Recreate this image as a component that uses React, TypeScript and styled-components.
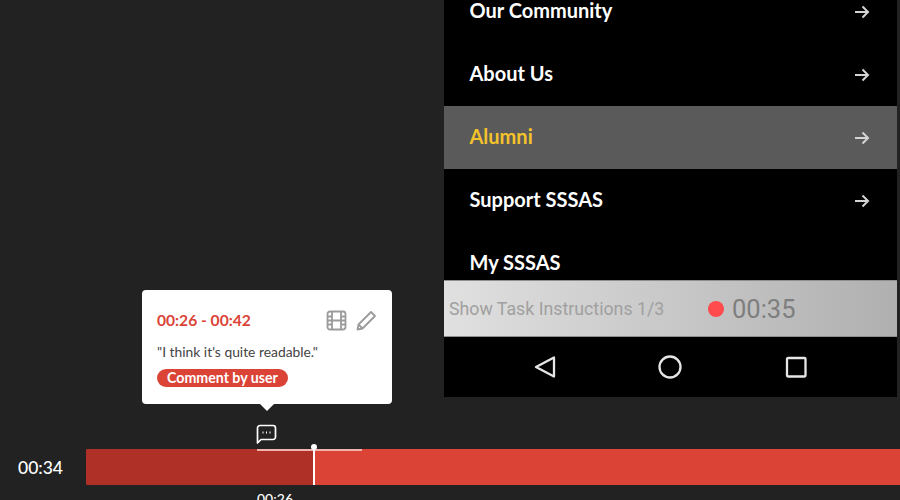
import React from 'react';
import styled, { createGlobalStyle } from 'styled-components';

const GlobalStyle = createGlobalStyle`
  html, body {
    margin: 0;
    padding: 0;
    background: #222222;
  }
`;

const Page = styled.div`
  position: relative;
  width: 900px;
  height: 500px;
  overflow: hidden;
  background: #222222;
  font-family: 'Lato', sans-serif;
`;

const Stage = styled.div`
  display: flex;
  justify-content: flex-end;
  height: 397px;
  padding-right: 3px;
`;

const Phone = styled.div`
  display: flex;
  flex-direction: column;
  width: 453px;
  height: 397px;
  background: #000;
  overflow: hidden;
`;

const Menu = styled.div`
  height: 280px;
  overflow: hidden;
`;

const MenuList = styled.div`
  margin-top: -20px;
`;

const MenuRow = styled.div<{ $active?: boolean }>`
  display: flex;
  align-items: center;
  justify-content: space-between;
  box-sizing: border-box;
  height: 63px;
  padding: 0 27px 4px 25.5px;
  background: ${p => (p.$active ? '#5a5a5a' : 'transparent')};
  color: ${p => (p.$active ? '#f4c22b' : '#fff')};
  font-size: 20px;
  font-weight: 700;
`;

const Arrow = styled.svg`
  width: 16px;
  height: 14px;
  margin-top: 5px;
  color: #d4d4d4;
`;

const TaskBar = styled.div`
  display: flex;
  align-items: center;
  box-sizing: border-box;
  height: 57px;
  padding-left: 5px;
  background: linear-gradient(90deg, #e0e0e0 0%, #b0b0b0 100%);
  border-top: 1px solid #8f8f8f;
  border-bottom: 1px solid #8f8f8f;
  font-family: 'Roboto', sans-serif;
`;

const TaskLabel = styled.span`
  width: 259px;
  color: #a0a0a0;
  font-size: 17.75px;
  white-space: nowrap;
`;

const RecDot = styled.span`
  width: 16px;
  height: 16px;
  border-radius: 50%;
  background: #ff4b4e;
  margin-right: 8px;
`;

const RecTime = styled.span`
  color: #7e7e7e;
  font-size: 25.5px;
`;

const NavBar = styled.div`
  display: flex;
  align-items: center;
  flex: 1;
  padding-left: 89px;
  gap: 101px;
  color: #e6e6e6;
`;

const NavIcon = styled.svg`
  width: 24px;
  height: 24px;
`;

const Timeline = styled.div`
  display: flex;
  align-items: center;
  height: 36px;
  margin-top: 52px;
`;

const CurrentTime = styled.div`
  width: 86px;
  box-sizing: border-box;
  padding-left: 18px;
  color: #fff;
  font-size: 17.5px;
  font-weight: 500;
  font-family: 'Lato', sans-serif;
`;

const Track = styled.div`
  position: relative;
  flex: 1;
  height: 36px;
  background: #db4337;
  border-radius: 2px 0 0 2px;
`;

const Played = styled.div`
  height: 100%;
  background: #ae3026;
  border-radius: 2px 0 0 2px;
`;

const CommentRange = styled.div`
  position: absolute;
  top: 0;
  height: 2px;
  background: #efb4ae;
`;

const Playhead = styled.div`
  position: absolute;
  top: 0;
  bottom: 0;
  width: 2px;
  background: #fff;

  &::before {
    content: '';
    position: absolute;
    top: -5px;
    left: -2px;
    width: 6px;
    height: 6px;
    border-radius: 50%;
    background: #fff;
  }
`;

const CommentMark = styled.svg`
  position: absolute;
  top: -25px;
  width: 21px;
  height: 21px;
  color: #fff;
`;

const MarkTime = styled.div`
  position: absolute;
  top: 41px;
  color: #fff;
  font-size: 14px;
  font-weight: 500;
`;

const Popover = styled.div`
  position: absolute;
  left: 142px;
  top: 290px;
  box-sizing: border-box;
  width: 250px;
  height: 114px;
  padding: 20px 15px 0;
  background: #fff;
  border-radius: 4px;

  &::after {
    content: '';
    position: absolute;
    left: 118px;
    bottom: -7px;
    border-left: 7px solid transparent;
    border-right: 7px solid transparent;
    border-top: 7px solid #fff;
  }
`;

const PopoverHead = styled.div`
  display: flex;
  align-items: center;
  justify-content: space-between;
  height: 20px;
`;

const Range = styled.span`
  color: #db4337;
  font-size: 15.6px;
  font-weight: 700;
`;

const PopoverIcons = styled.div`
  display: flex;
  align-items: center;
  gap: 9px;
  color: #9b9b9b;
`;

const PopoverIcon = styled.svg`
  width: 21px;
  height: 21px;
`;

const Quote = styled.div`
  margin-top: 13px;
  color: #444;
  font-size: 13.85px;
  line-height: 18px;
`;

const Tag = styled.span`
  display: inline-block;
  margin-top: 8px;
  padding: 0 10px;
  height: 18px;
  line-height: 17px;
  border-radius: 9px;
  background: #db4337;
  color: #fff;
  font-size: 14.2px;
  font-weight: 700;
`;

const menuItems = ['Our Community', 'About Us', 'Alumni', 'Support SSSAS', 'My SSSAS'];

const App: React.FC = () => {
  return (
    <Page>
      <GlobalStyle />
      <Stage>
        <Phone>
          <Menu>
            <MenuList>
              {menuItems.map(item => (
                <MenuRow key={item} $active={item === 'Alumni'}>
                  {item}
                  {item !== 'My SSSAS' && (
                    <Arrow viewBox="0 0 16 14" fill="none" stroke="currentColor" strokeWidth="2">
                      <path d="M1 7h13M8.500 1.500 14 7l-5.500 5.500" />
                    </Arrow>
                  )}
                </MenuRow>
              ))}
            </MenuList>
          </Menu>
          <TaskBar>
            <TaskLabel>Show Task Instructions 1/3</TaskLabel>
            <RecDot />
            <RecTime>00:35</RecTime>
          </TaskBar>
          <NavBar>
            <NavIcon viewBox="0 0 24 24" fill="none" stroke="currentColor" strokeWidth="2.300" strokeLinejoin="round">
              <path d="M21 2.500v19L3 12z" />
            </NavIcon>
            <NavIcon viewBox="0 0 24 24" fill="none" stroke="currentColor" strokeWidth="2.300">
              <circle cx="12" cy="12" r="10.500" />
            </NavIcon>
            <NavIcon viewBox="0 0 24 24" fill="none" stroke="currentColor" strokeWidth="2.300" strokeLinejoin="round">
              <rect x="4" y="3" width="18.500" height="18.500" rx="1" />
            </NavIcon>
          </NavBar>
        </Phone>
      </Stage>

      <Timeline>
        <CurrentTime>00:34</CurrentTime>
        <Track>
          <Played style={{ width: 228 }} />
          <CommentRange style={{ left: 171, width: 105 }} />
          <Playhead style={{ left: 227 }} />
          <CommentMark style={{ left: 170 }} viewBox="0 0 21 21" fill="none" stroke="currentColor" strokeWidth="1.700" strokeLinejoin="round">
            <path d="M1.500 19V4a2.500 2.500 0 0 1 2.500-2.500h13A2.500 2.500 0 0 1 19.500 4v9a2.500 2.500 0 0 1-2.500 2.500H5z" />
            <path d="M6.500 8.500h1M10 8.500h1M13.500 8.500h1" strokeWidth="1.800" />
          </CommentMark>
          <MarkTime style={{ left: 171 }}>00:26</MarkTime>
        </Track>
      </Timeline>

      <Popover>
        <PopoverHead>
          <Range>00:26 - 00:42</Range>
          <PopoverIcons>
            <PopoverIcon viewBox="0 0 21 21" fill="none" stroke="currentColor" strokeWidth="1.800">
              <rect x="1.500" y="1.500" width="18" height="18" rx="2.500" />
              <path d="M6 1.500v18M15 1.500v18M1.500 6.500H6M1.500 10.500H6M1.500 14.500H6M15 6.500h4.500M15 10.500h4.500M15 14.500h4.500M6 10.500h9" />
            </PopoverIcon>
            <PopoverIcon viewBox="0 0 21 21" fill="none" stroke="currentColor" strokeWidth="1.800" strokeLinejoin="round">
              <path d="M1.500 19.500l1-5L15 2l4 4L6.500 18.500zM2.500 14.500l4 4" />
            </PopoverIcon>
          </PopoverIcons>
        </PopoverHead>
        <Quote>"I think it's quite readable."</Quote>
        <Tag>Comment by user</Tag>
      </Popover>
    </Page>
  );
};

export default App;
